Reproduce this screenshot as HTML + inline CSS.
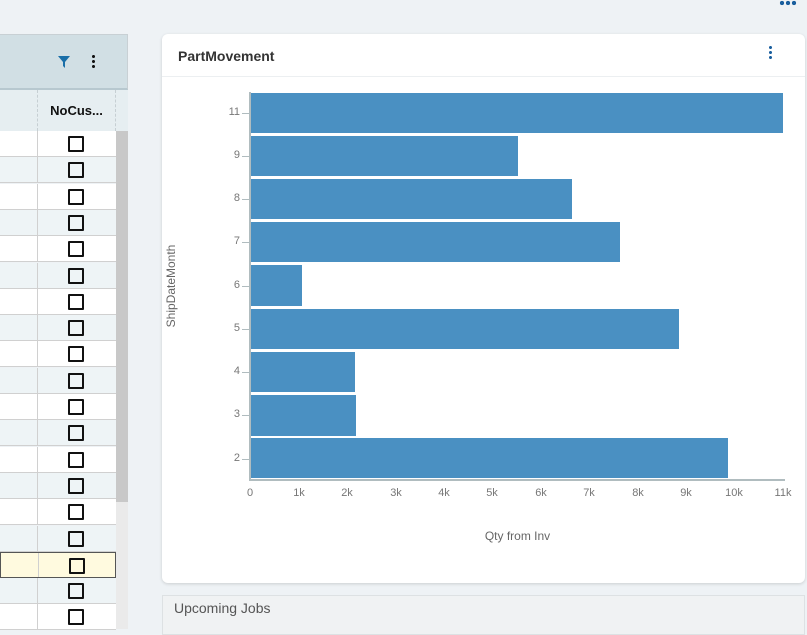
<!DOCTYPE html>
<html><head><style>
body{margin:0;width:807px;height:629px;overflow:hidden;background:#eef2f5;font-family:"Liberation Sans",sans-serif;position:relative}
.a{position:absolute}
.row{position:absolute;left:0;width:116px;height:26px;border-bottom:1px solid #d0d0d0;box-sizing:border-box}
.cb{position:absolute;left:68px;width:16px;height:16px;border:2px solid #111;border-radius:1px;box-sizing:border-box}
.bar{position:absolute;left:251px;background:#4a90c2;height:40px}
.yl{position:absolute;left:200px;width:40px;text-align:right;font-size:11px;color:#777}
.yt{position:absolute;left:242px;width:7px;height:1px;background:#b0bcbf}
.xl{position:absolute;top:487px;font-size:11px;color:#777;width:30px;text-align:center}
</style></head><body>
<div class="a" style="left:779px;top:0;width:18px;height:6px;background:radial-gradient(circle,#1a5f9e 2px,transparent 2.3px) 0 0/6px 6px"></div>
<!-- grid -->
<div class="a" style="left:0;top:34px;width:128px;height:56px;background:#d1dfe4;border-top:1px solid #c8d0d4;border-right:1px solid #c8d0d4;border-bottom:2px solid #b7c8cf;box-sizing:border-box"></div>
<svg class="a" style="left:57px;top:55px" width="14" height="14"><path d="M1 1H13L8 7V13L6 11V7Z" fill="#1a6fa8"/></svg>
<div class="a" style="left:92px;top:54px;width:3px;height:14px;background:radial-gradient(circle,#111 1.4px,transparent 1.6px) 0 0/3px 5px"></div>
<div class="a" style="left:0;top:90px;width:116px;height:41px;background:#e6eef1;border-bottom:1px solid #cfd5d8"></div>
<div class="a" style="left:37px;top:90px;width:79px;height:41px;border-left:1px dashed #c6cfd3;border-right:1px dashed #c6cfd3;box-sizing:border-box;font-size:13px;font-weight:bold;color:#111;text-align:center;line-height:41px">NoCus...</div>
<div class="a" style="left:116px;top:90px;width:12px;height:41px;background:#e6eef1"></div>
<div class="a" style="left:116px;top:131px;width:12px;height:498px;background:#eaeaea"></div>
<div class="a" style="left:116px;top:131px;width:12px;height:371px;background:#c8c8c8"></div>
<div id="rows"></div>
<script>
var h='';for(var i=0;i<19;i++){var t=131+i*26.3;var bg=i==16?'#fffadf':(i%2?'#eef4f6':'#fff');var bd=i==16?'border:1px solid #555;':'';
h+='<div class="row" style="top:'+t+'px;background:'+bg+';'+bd+'"><div class="a" style="left:37px;top:0;height:100%;border-left:1px solid #d0d0d0"></div><div class="cb" style="top:5px"></div></div>';}
document.getElementById('rows').innerHTML=h;
</script>
<!-- card -->
<div class="a" style="left:162px;top:34px;width:643px;height:549px;background:#fff;border-radius:6px;box-shadow:0 1px 3px rgba(0,0,0,.15)"></div>
<div class="a" style="left:178px;top:48px;font-size:14px;font-weight:bold;color:#333">PartMovement</div>
<div class="a" style="left:769px;top:45px;width:3px;height:15px;background:radial-gradient(circle,#1a5f9e 1.4px,transparent 1.6px) 0 0/3px 5px"></div>
<div class="a" style="left:162px;top:76px;width:643px;height:1px;background:#eceff1"></div>
<div class="a" style="left:249px;top:92px;width:2px;height:389px;background:#b0bcbf"></div>
<div class="a" style="left:249px;top:479px;width:536px;height:2px;background:#b0bcbf"></div>
<div class="bar" style="top:93px;width:532px"></div>
<div class="bar" style="top:136px;width:267px"></div>
<div class="bar" style="top:179px;width:321px"></div>
<div class="bar" style="top:222px;width:369px"></div>
<div class="bar" style="top:265px;width:51px;height:41px"></div>
<div class="bar" style="top:309px;width:428px"></div>
<div class="bar" style="top:352px;width:104px"></div>
<div class="bar" style="top:395px;width:105px;height:41px"></div>
<div class="bar" style="top:438px;width:477px"></div>
<div class="yl" style="top:106px">11</div><div class="yt" style="top:113px"></div>
<div class="yl" style="top:149px">9</div><div class="yt" style="top:156px"></div>
<div class="yl" style="top:192px">8</div><div class="yt" style="top:199px"></div>
<div class="yl" style="top:235px">7</div><div class="yt" style="top:242px"></div>
<div class="yl" style="top:279px">6</div><div class="yt" style="top:286px"></div>
<div class="yl" style="top:322px">5</div><div class="yt" style="top:329px"></div>
<div class="yl" style="top:365px">4</div><div class="yt" style="top:372px"></div>
<div class="yl" style="top:408px">3</div><div class="yt" style="top:415px"></div>
<div class="yl" style="top:452px">2</div><div class="yt" style="top:459px"></div>
<div class="xl" style="left:235px">0</div><div class="xl" style="left:284px">1k</div><div class="xl" style="left:332px">2k</div><div class="xl" style="left:381px">3k</div><div class="xl" style="left:429px">4k</div><div class="xl" style="left:477px">5k</div><div class="xl" style="left:526px">6k</div><div class="xl" style="left:574px">7k</div><div class="xl" style="left:623px">8k</div><div class="xl" style="left:671px">9k</div><div class="xl" style="left:719px">10k</div><div class="xl" style="left:768px">11k</div>
<div class="a" style="left:121px;top:279px;transform:rotate(-90deg);font-size:12px;color:#666;width:100px;text-align:center;white-space:nowrap">ShipDateMonth</div>
<div class="a" style="left:450px;top:529px;width:135px;text-align:center;font-size:12px;color:#666">Qty from Inv</div>
<div class="a" style="left:162px;top:595px;width:643px;height:40px;background:#f0f2f3;border:1px solid #dde1e3;box-sizing:border-box"></div>
<div class="a" style="left:174px;top:600px;font-size:14px;color:#555">Upcoming Jobs</div>
</body></html>
